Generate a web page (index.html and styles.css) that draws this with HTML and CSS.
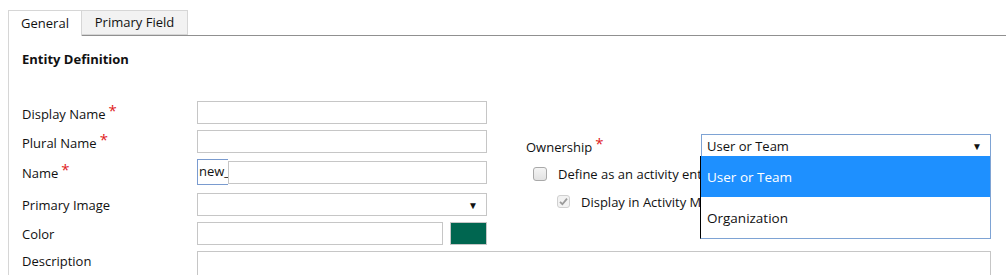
FILE: index.html
```html
<!DOCTYPE html>
<html lang="en">
<head>
    <meta charset="UTF-8">
    <title>New Entity</title>
    <link rel="stylesheet" href="styles.css">
</head>
<body>
    <div class="tabs">
        <div class="tab active">General</div>
        <div class="tab">Primary Field</div>
    </div>

    <div class="panel">
        <h2 class="sectionTitle">Entity Definition</h2>

        <div class="formColumns">
            <div class="column">
                <div class="row">
                    <label class="label">Display Name<span class="req">*</span></label>
                    <input type="text" class="field">
                </div>
                <div class="row">
                    <label class="label">Plural Name<span class="req">*</span></label>
                    <input type="text" class="field">
                </div>
                <div class="row nameRow">
                    <label class="label">Name<span class="req">*</span></label>
                    <div class="prefixField">
                        <span class="prefix">new_</span>
                        <input type="text" class="field">
                    </div>
                </div>
                <div class="row">
                    <label class="label">Primary Image</label>
                    <div class="select">
                        <span class="selectValue"></span>
                        <span class="arrow">&#9660;</span>
                    </div>
                </div>
                <div class="row">
                    <label class="label">Color</label>
                    <div class="colorField">
                        <input type="text" class="field">
                        <span class="swatch"></span>
                    </div>
                </div>
            </div>

            <div class="column rightColumn">
                <div class="row">
                    <label class="label">Ownership<span class="req">*</span></label>
                    <div class="selectWrap">
                        <div class="select open">
                            <span class="selectValue">User or Team</span>
                            <span class="arrow">&#9660;</span>
                        </div>
                        <ul class="dropdown">
                            <li class="option selected">User or Team</li>
                            <li class="option">Organization</li>
                        </ul>
                    </div>
                </div>
                <div class="checkRow">
                    <span class="checkbox"></span>
                    <span>Define as an activity entity</span>
                </div>
                <div class="checkRow sub">
                    <span class="checkbox checked disabled">
                        <svg width="11" height="11" viewBox="0 0 11 11"><path d="M2 5.8 L4.4 8.2 L9 2.6" fill="none" stroke="#9a9a9a" stroke-width="1.8"/></svg>
                    </span>
                    <span>Display in Activity Menus</span>
                </div>
            </div>
        </div>

        <div class="row descRow">
            <label class="label">Description</label>
            <textarea class="field textArea"></textarea>
        </div>
    </div>
</body>
</html>
```

FILE: styles.css
```css
body {
    margin: 0;
    padding: 10px 0 0 8px;
    font-family: 'Open Sans', 'Noto Sans', sans-serif;
    font-size: 13px;
    color: #111;
    background-color: #fff;
    overflow: hidden;
}

.tabs {
    display: flex;
    align-items: flex-start;
    height: 25px;
    border-bottom: 1px solid #909090;
}

.tab {
    box-sizing: border-box;
    text-align: center;
    border: 1px solid #d6d6d6;
}

.tab.active {
    position: relative;
    width: 74px;
    height: 26px;
    line-height: 25px;
    border-bottom: none;
    background-color: #fff;
}

.tab + .tab {
    width: 106px;
    height: 25px;
    line-height: 23px;
    border-left: none;
    background-color: #f2f2f2;
}

.panel {
    border-left: 1px solid #d6d6d6;
    padding: 13px 0 0 13px;
    height: 226px;
    overflow: hidden;
}

.sectionTitle {
    margin: 0;
    font-size: 13px;
    font-weight: bold;
    line-height: 20px;
}

.formColumns {
    display: flex;
    gap: 39px;
    margin-top: 32px;
}

.column {
    width: 465px;
    display: flex;
    flex-direction: column;
    gap: 6px;
}

.row {
    display: flex;
    align-items: center;
    height: 23px;
}

.label {
    width: 175px;
    flex-shrink: 0;
}

.req {
    color: #e0201c;
    font-size: 15px;
    margin-left: 3px;
    position: relative;
    top: -3px;
}

.field {
    box-sizing: border-box;
    width: 290px;
    height: 23px;
    border: 1px solid #c6c6c6;
    margin: 0;
    padding: 0 4px;
    font: inherit;
    outline: none;
}

.nameRow {
    height: 28px;
    align-items: flex-start;
}

.nameRow .label {
    line-height: 26px;
}

.prefixField {
    display: flex;
    align-items: flex-start;
}

.prefix {
    box-sizing: border-box;
    width: 31px;
    height: 26px;
    border: 1px solid #7a9bcf;
    border-right: none;
    line-height: 23px;
    padding-left: 1px;
}

.prefixField .field {
    width: 259px;
    margin-top: 2px;
}

.select {
    box-sizing: border-box;
    width: 290px;
    height: 23px;
    border: 1px solid #c6c6c6;
    display: flex;
    align-items: center;
    justify-content: space-between;
    padding: 0 8px 0 5px;
}

.arrow {
    font-size: 10px;
    color: #111;
}

.colorField {
    display: flex;
    gap: 7px;
}

.colorField .field {
    width: 246px;
}

.swatch {
    box-sizing: border-box;
    width: 37px;
    height: 23px;
    border: 1px solid #c6c6c6;
    background-color: #006650;
}

.rightColumn {
    padding-top: 33px;
    gap: 0;
}

.selectWrap {
    position: relative;
}

.select.open {
    border-color: #7ea3d4;
    border-bottom-color: #000;
}

.dropdown {
    position: absolute;
    top: 22px;
    left: -1px;
    width: 291px;
    margin: 0;
    padding: 0;
    list-style: none;
    background-color: #fff;
    border-left: 1px solid #000;
    border-right: 1px solid #7ea3d4;
    border-bottom: 1px solid #7ea3d4;
    box-sizing: border-box;
    z-index: 2;
}

.option {
    height: 41px;
    line-height: 43px;
    padding-left: 6px;
    font-size: 13.5px;
}

.option.selected {
    background-color: #1e90ff;
    color: #fff;
}

.checkRow {
    display: flex;
    align-items: center;
    height: 23px;
    margin-top: 5px;
    padding-left: 7px;
    gap: 11px;
}

.checkRow.sub {
    padding-left: 31px;
    gap: 11px;
}

.checkbox {
    box-sizing: border-box;
    width: 14px;
    height: 14px;
    border: 1px solid #a9a9a9;
    border-radius: 3px;
    background: linear-gradient(#f4f4f4, #e2e2e2);
    display: flex;
    align-items: center;
    justify-content: center;
}

.checkbox.disabled {
    width: 13px;
    height: 13px;
    border-color: #d0d0d0;
    background: #f2f2f2;
}

.descRow {
    margin-top: 6px;
    align-items: flex-start;
}

.textArea {
    width: 794px;
    height: 40px;
    resize: none;
}

.descRow .label {
    line-height: 20px;
}
```
